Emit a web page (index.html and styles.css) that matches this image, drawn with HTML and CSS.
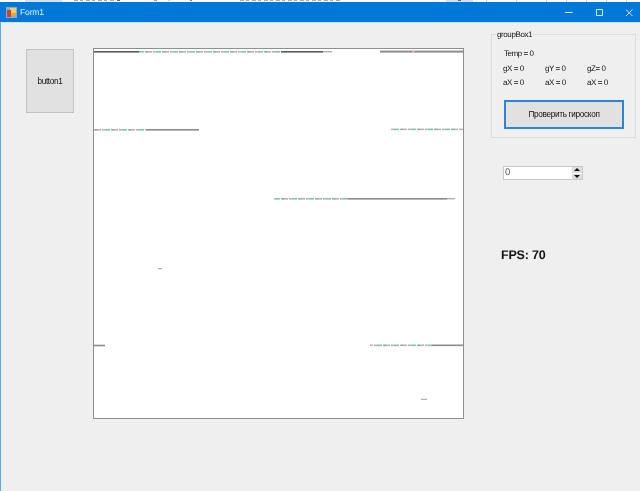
FILE: index.html
```html
<!DOCTYPE html>
<html lang="en">
<head>
<meta charset="utf-8">
<title>Form1</title>
<link rel="stylesheet" href="styles.css">
</head>
<body>
<div class="page">
  <svg class="behind" width="640" height="2" viewBox="0 0 640 2" shape-rendering="crispEdges" aria-hidden="true">
    <rect class="bh-tab" x="25" y="0" width="37" height="2"/>
    <path class="bh-text" d="M74 .5H116"/>
    <rect class="bh-dark" x="117" y="0" width="3" height="1"/>
    <rect class="bh-red" x="154" y="0" width="3" height="1"/>
    <rect class="bh-grey" x="168" y="0" width="2" height="1"/>
    <rect class="bh-brown" x="190" y="0" width="2" height="1"/>
    <path class="bh-text" d="M240 .5H340"/>
    <rect class="bh-tab" x="446" y="0" width="27" height="2"/>
    <rect class="bh-dark" x="458" y="0" width="3" height="1"/>
    <rect class="bh-grey" x="486" y="0" width="1" height="2"/>
    <rect class="bh-grey" x="516" y="0" width="1" height="2"/>
    <rect class="bh-grey" x="546" y="0" width="1" height="2"/>
    <rect class="bh-grey" x="566" y="0" width="1" height="2"/>
    <rect class="bh-grey" x="586" y="0" width="1" height="2"/>
    <rect class="bh-grey" x="606" y="0" width="1" height="2"/>
    <rect class="bh-grey" x="626" y="0" width="1" height="2"/>
  </svg>
  <header class="titlebar">
    <svg class="app-icon" width="11" height="11" viewBox="0 0 11 11" shape-rendering="crispEdges" aria-hidden="true">
      <rect width="11" height="11" fill="#8fa9c4"/>
      <rect x="4" y="1" width="6" height="5" fill="#f2cf5a"/>
      <rect x="1" y="3" width="4" height="7" fill="#c8413a"/>
      <rect x="5" y="6" width="5" height="3" fill="#e3a53f"/>
    </svg>
    <span class="title">Form1</span>
    <div class="controls">
      <svg width="75" height="10" viewBox="0 0 75 10" aria-hidden="true">
        <path class="glyph" d="M0 5.5H7.5"/>
        <path class="glyph" d="M31.5 2.5H37.5V8.5H31.5Z"/>
        <path class="glyph" d="M61 2.5L67.5 9M67.5 2.5L61 9"/>
      </svg>
    </div>
  </header>
  <main class="client">
    <button class="btn btn-side" type="button">button1</button>
    <div class="plot">
      <svg class="scan" width="369" height="368" viewBox="94 49 369 368" aria-hidden="true">
        <defs>
          <pattern id="noise" patternUnits="userSpaceOnUse" x="0" y="0" width="17" height="4">
            <rect width="17" height="4" fill="#9fb8ac"/>
            <rect x="1" width="2" height="4" fill="#d3a6d6"/>
            <rect x="4" width="3" height="4" fill="#79c9a4"/>
            <rect x="8" width="1" height="4" fill="#ffffff"/>
            <rect x="10" width="2" height="4" fill="#8fa0a0"/>
            <rect x="13" width="2" height="4" fill="#cda8c8"/>
            <rect x="16" width="1" height="4" fill="#ffffff"/>
          </pattern>
        </defs>
        <rect class="ln" x="94" y="51" width="45" height="1.6"/>
        <rect class="noise" x="139" y="51" width="142" height="1.6"/>
        <rect class="ln" x="281" y="51" width="42" height="1.6"/>
        <rect class="ln-l" x="323" y="51" width="9" height="1.4"/>
        <rect class="ln-g" x="380" y="50.6" width="83" height="2"/>
        <rect class="pink" x="412" y="50.6" width="3" height="2"/>

        <rect class="noise" x="94" y="129" width="53" height="1.6"/>
        <rect class="ln-g" x="147" y="129" width="52" height="1.6"/>
        <rect class="noise" x="390" y="128.6" width="73" height="1.5"/>

        <rect class="noise" x="274" y="198" width="74" height="1.6"/>
        <rect class="ln-g" x="348" y="198" width="99" height="1.6"/>
        <rect class="ln-l" x="447" y="198" width="8" height="1.4"/>

        <rect class="ln-l" x="158" y="268" width="4" height="1.2"/>

        <rect class="ln-g" x="94" y="344.7" width="11" height="1.6"/>
        <rect class="noise" x="370" y="344.5" width="62" height="1.6"/>
        <rect class="ln-g" x="432" y="344.5" width="31" height="1.6"/>

        <rect class="ln-l" x="421" y="398.8" width="6" height="1.2"/>
      </svg>
    </div>
    <aside class="side">
      <fieldset class="group">
        <legend class="legend">groupBox1</legend>
        <div class="readings">
          <span class="temp">Temp = 0</span>
          <span>gX = 0</span><span>gY = 0</span><span>gZ= 0</span>
          <span>aX = 0</span><span>aX = 0</span><span>aX = 0</span>
        </div>
        <button class="btn btn-check" type="button">Проверить гироскоп</button>
      </fieldset>
      <div class="numeric">
        <span class="numeric-value">0</span>
        <span class="spin">
          <span class="spin-btn"><i class="arrow-up"></i></span>
          <span class="spin-btn"><i class="arrow-down"></i></span>
        </span>
      </div>
      <div class="fps">FPS: 70</div>
    </aside>
  </main>
</div>
</body>
</html>
```
FILE: styles.css
```css
* { box-sizing: border-box; }
html, body { margin: 0; padding: 0; }
body {
  width: 640px;
  height: 491px;
  overflow: hidden;
  background: #efefef;
  font-family: "Liberation Sans", Arial, sans-serif;
  font-size: 8.2px;
  letter-spacing: -0.3px;
  color: #111;
  text-rendering: geometricPrecision;
}
.page {
  display: flex;
  flex-direction: column;
  height: 491px;
  filter: blur(0.35px);
}
.behind { display: block; flex: none; background: #fafafa; }
.bh-tab { fill: #cfe3f5; }
.bh-dark { fill: #666; }
.bh-text { fill: none; stroke: #a8a8a8; stroke-width: 1; stroke-dasharray: 4 2 3 3; }
.bh-red { fill: #d98a80; }
.bh-grey { fill: #cfcfcf; }
.bh-brown { fill: #a9714f; }

.titlebar {
  flex: none;
  height: 20px;
  background: #0078d7;
  display: flex;
  align-items: center;
  padding-left: 6px;
}
.app-icon { flex: none; display: block; }
.title {
  margin-left: 3px;
  font-size: 8.6px;
  letter-spacing: -0.2px;
  color: #e2f0fb;
}
.controls { margin-left: auto; display: flex; }
.controls svg { display: block; }
.glyph { fill: none; stroke: #d6e9f9; stroke-width: 1; }

.client {
  flex: 1;
  display: flex;
  align-items: flex-start;
  background: #efefef;
  border-left: 1px solid #5aa9ee;
  border-top: 1px solid #cfe2f2;
}
.btn {
  font: inherit;
  letter-spacing: inherit;
  color: #111;
  background: #e1e1e1;
  padding: 0;
}
.btn-side {
  flex: none;
  width: 48px;
  height: 64px;
  margin: 26px 0 0 25px;
  border: 1px solid #c2c2c2;
}
.plot {
  flex: none;
  width: 371px;
  height: 371px;
  margin: 25px 0 0 19px;
  background: #fff;
  border: 1px solid #8f8f8f;
}
.scan { display: block; }
.ln { fill: #5a5a5a; }
.ln-g { fill: #8c8c8c; }
.ln-l { fill: #b0b0b0; }
.pink { fill: #e3a9df; }
.noise { fill: url(#noise); }

.side {
  flex: none;
  width: 145px;
  margin: 5px 0 0 27px;
  display: flex;
  flex-direction: column;
}
.group {
  margin: 0;
  min-width: 0;
  width: 145px;
  height: 110px;
  padding: 0 0 0 11px;
  border: 1px solid #dcdcdc;
}
.legend {
  margin-left: -7px;
  padding: 0 1px;
  font-size: 8px;
  letter-spacing: -0.4px;
  line-height: 13px;
}
.readings {
  display: grid;
  grid-template-columns: repeat(3, 42px);
  grid-auto-rows: 14.5px;
  font-size: 8px;
  letter-spacing: -0.45px;
  line-height: 14.5px;
  margin-top: 6px;
}
.temp { grid-column: 1 / -1; padding-left: 1px; }
.btn-check {
  display: block;
  width: 120px;
  height: 29px;
  margin: 9px 0 0 1px;
  border: 2px solid #2d84d3;
}
.numeric {
  display: flex;
  align-items: stretch;
  width: 80px;
  height: 14px;
  margin: 28px 0 0 12px;
  background: #fff;
  border: 1px solid #c8c8c8;
}
.numeric-value {
  flex: 1;
  padding-left: 1px;
  font-size: 9.5px;
  letter-spacing: 0;
  line-height: 12px;
  color: #555;
}
.spin {
  flex: none;
  width: 10px;
  display: flex;
  flex-direction: column;
  gap: 1px;
  background: #fff;
}
.spin-btn {
  flex: 1;
  background: #dedede;
  display: flex;
  align-items: center;
  justify-content: center;
}
.arrow-up, .arrow-down {
  display: block;
  width: 0;
  height: 0;
  border-left: 3px solid transparent;
  border-right: 3px solid transparent;
}
.arrow-up { border-bottom: 3px solid #111; }
.arrow-down { border-top: 3px solid #111; }
.fps {
  margin: 68px 0 0 10px;
  font-size: 12.5px;
  letter-spacing: -0.2px;
  font-weight: 700;
  line-height: 14px;
  color: #111;
}
```
